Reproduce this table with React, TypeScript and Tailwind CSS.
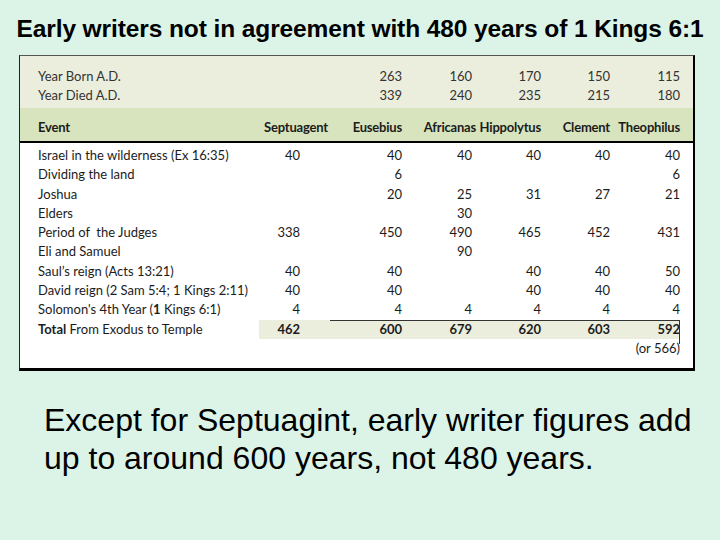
import React from "react";

type Cell = string | number;

const born: Cell[] = ["", 263, 160, 170, 150, 115];
const died: Cell[] = ["", 339, 240, 235, 215, 180];

const body: { label: React.ReactNode; vals: Cell[] }[] = [
  { label: "Israel in the wilderness (Ex 16:35)", vals: [40, 40, 40, 40, 40, 40] },
  { label: "Dividing the land", vals: ["", 6, "", "", "", 6] },
  { label: "Joshua", vals: ["", 20, 25, 31, 27, 21] },
  { label: "Elders", vals: ["", "", 30, "", "", ""] },
  { label: "Period of\u00a0 the Judges", vals: [338, 450, 490, 465, 452, 431] },
  { label: "Eli and Samuel", vals: ["", "", 90, "", "", ""] },
  { label: "Saul\u2019s reign (Acts 13:21)", vals: [40, 40, "", 40, 40, 50] },
  { label: "David reign (2 Sam 5:4; 1 Kings 2:11)", vals: [40, 40, "", 40, 40, 40] },
  {
    label: (
      <>
        Solomon&apos;s 4th Year (<span className="font-bold">1</span> Kings 6:1)
      </>
    ),
    vals: [4, 4, 4, 4, 4, 4],
  },
];

const total: Cell[] = [462, 600, 679, 620, 603, 592];

function NumCells({ vals, bold }: { vals: Cell[]; bold?: boolean }) {
  return (
    <>
      <div className={`w-[71px] pr-[30px] text-right ${bold ? "font-bold" : ""}`}>{vals[0]}</div>
      <div className={`w-[72px] text-right ${bold ? "font-bold" : ""}`}>{vals[1]}</div>
      <div className={`w-[70px] text-right ${bold ? "font-bold" : ""}`}>{vals[2]}</div>
      <div className={`w-[69px] text-right ${bold ? "font-bold" : ""}`}>{vals[3]}</div>
      <div className={`w-[69px] text-right ${bold ? "font-bold" : ""}`}>{vals[4]}</div>
      <div className={`w-[70px] text-right ${bold ? "font-bold" : ""}`}>{vals[5]}</div>
    </>
  );
}

export default function App() {
  return (
    <div
      className="w-[720px] h-[540px] bg-[#dcf4e7] overflow-hidden text-black"
      style={{ fontFamily: '"Liberation Sans", Arial, sans-serif' }}
    >
      <h1 className="pt-[15px] text-center text-[24.5px] leading-[28px] font-bold tracking-[-0.1px]">
        Early writers not in agreement with 480 years of 1 Kings 6:1
      </h1>

      <div
        className="ml-[19px] mt-[12px] w-[676px] border-l border-t border-l-[#222] border-t-[#555] border-r-2 border-b-[3px] border-r-black border-b-black bg-white text-[13px] text-[#1c1c1c]"
        style={{ fontFamily: 'Lato, "Open Sans", sans-serif' }}
      >
        <div className="bg-[#ebeedd] pt-[11px] pb-[3px] pl-[18px] pr-[13px] text-[#333]">
          <div className="flex h-[19px] items-center">
            <div className="w-[221px]">Year Born A.D.</div>
            <NumCells vals={born} />
          </div>
          <div className="flex h-[19px] items-center">
            <div className="w-[221px]">Year Died A.D.</div>
            <NumCells vals={died} />
          </div>
        </div>

        <div className="flex h-[29px] items-end pb-[4px] leading-[19px] bg-[#d7e4bd] pl-[18px] pr-[13px] font-bold tracking-[-0.2px] border-b-2 border-black box-content">
          <div className="w-[221px]">Event</div>
          <div className="w-[71px] pr-[2px] text-right whitespace-nowrap">Septuagent</div>
          <div className="w-[72px] text-right whitespace-nowrap">Eusebius</div>
          <div className="w-[74px] text-right whitespace-nowrap">Africanas</div>
          <div className="w-[65px] text-right whitespace-nowrap">Hippolytus</div>
          <div className="w-[69px] text-right whitespace-nowrap">Clement</div>
          <div className="w-[70px] text-right whitespace-nowrap">Theophilus</div>
        </div>

        <div className="pt-[3px] pb-[9.5px] pl-[18px] pr-[13px]">
          {body.map((r, i) => (
            <div key={i} className="flex h-[19.3px] items-center">
              <div className="w-[221px] whitespace-nowrap">{r.label}</div>
              <NumCells vals={r.vals} />
            </div>
          ))}
          <div className="flex h-[19.3px] items-stretch">
            <div className="w-[221px] flex items-center whitespace-nowrap">
              <span className="font-bold">Total</span>&nbsp;From Exodus to Temple
            </div>
            <div className="flex items-center bg-[#eceedd] w-[421px] relative">
              <div className="absolute left-[71px] right-0 top-0 border-t border-[#333]" />
              <div className="absolute right-0 top-0 h-[24px] border-r border-[#333]" />
              <NumCells vals={total} bold />
            </div>
          </div>
          <div className="flex h-[19.3px] items-center justify-end pr-0">
            <div className="w-[70px] text-right">(or 566)</div>
          </div>
        </div>
      </div>

      <p className="ml-[44px] mt-[30px] text-[32px] leading-[38px] w-[670px]">
        Except for Septuagint, early writer figures add up to around 600 years, not 480 years.
      </p>
    </div>
  );
}
